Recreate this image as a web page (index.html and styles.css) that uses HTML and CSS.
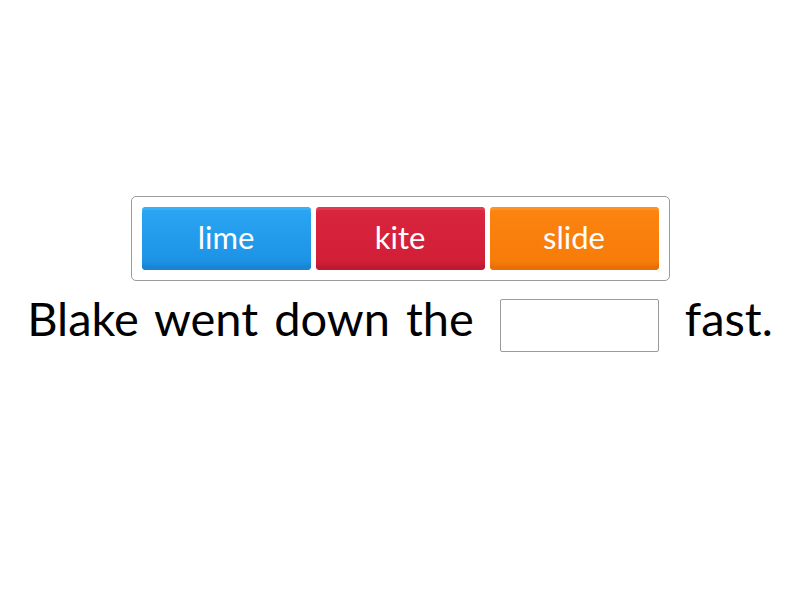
FILE: index.html
```html
<!DOCTYPE html>
<html>
<head>
<meta charset="utf-8">
<link rel="stylesheet" href="styles.css">
</head>
<body>
<main class="stage">
  <div class="bank">
    <div class="tile tile-blue">lime</div>
    <div class="tile tile-red">kite</div>
    <div class="tile tile-orange">slide</div>
  </div>
  <div class="sentence">
    <span class="words">Blake went down the</span>
    <span class="blank"></span>
    <span class="words">fast.</span>
  </div>
</main>
</body>
</html>
```
FILE: styles.css
```css
html, body {
  margin: 0;
  padding: 0;
  background: #ffffff;
}
body {
  width: 800px;
  height: 600px;
  font-family: "Lato", "Open Sans", sans-serif;
}
.stage {
  display: flex;
  flex-direction: column;
  align-items: center;
  padding-top: 196px;
}
.bank {
  box-sizing: border-box;
  width: 539px;
  height: 85px;
  border: 1px solid #9a9a9a;
  border-radius: 5px;
  padding: 10px;
  display: flex;
  gap: 5px;
}
.tile {
  flex: 1;
  box-sizing: border-box;
  height: 63px;
  border-radius: 4px;
  display: flex;
  align-items: center;
  justify-content: center;
  color: #ffffff;
  font-size: 31px;
  padding-bottom: 4px;
}
.tile-blue {
  background: linear-gradient(#2ba6f3, #1d93e6 85%, #1581d0);
  box-shadow: inset 0 -4px 0 #1a84d2, inset 0 3px 0 #38b0f6;
}
.tile-red {
  background: linear-gradient(#d9263e, #d11f37 85%, #bd1a30);
  box-shadow: inset 0 -4px 0 #bf1930, inset 0 3px 0 #e33a50;
}
.tile-orange {
  background: linear-gradient(#fd8410, #f77c0a 85%, #ea6f05);
  box-shadow: inset 0 -4px 0 #e96f04, inset 0 3px 0 #fe9224;
}
.sentence {
  display: flex;
  align-items: center;
  margin-top: 9px;
  color: #000000;
  font-size: 47px;
  gap: 26px;
}
.words {
  word-spacing: 4px;
  padding-bottom: 14px;
}
.blank {
  box-sizing: border-box;
  width: 159px;
  height: 53px;
  border: 1px solid #9a9a9a;
  border-radius: 2px;
}
```
